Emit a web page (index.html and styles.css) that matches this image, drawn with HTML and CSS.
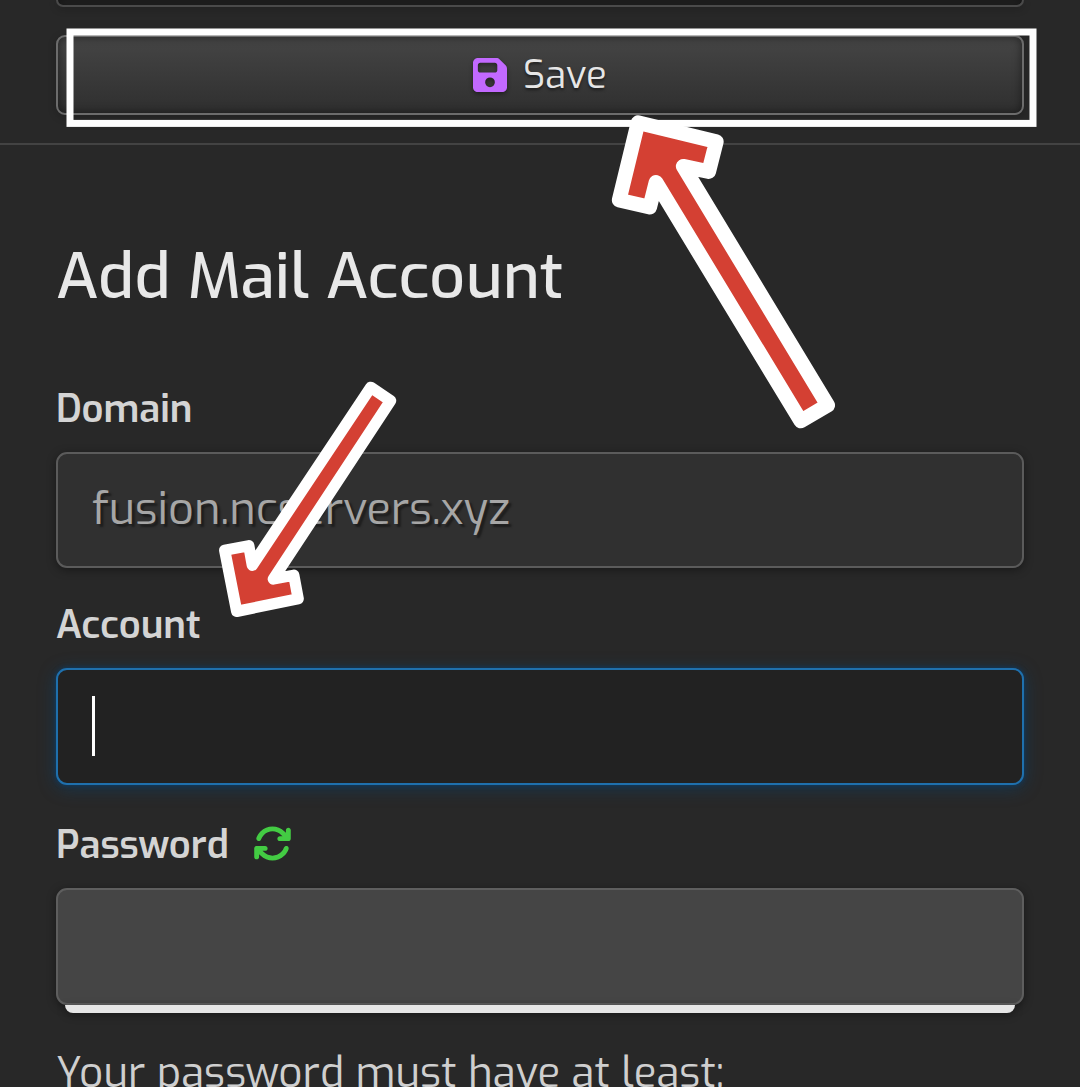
FILE: index.html
```html
<!DOCTYPE html>
<html lang="en">
<head>
<meta charset="utf-8">
<title>Add Mail Account</title>
<link rel="stylesheet" href="styles.css">
</head>
<body>
<div class="page">
  <section class="actions">
    <div class="button button-previous"></div>
    <button class="button button-save" type="button">
      <svg class="icon-save" viewBox="0 32 448 448"><path d="M64 32C28.7 32 0 60.7 0 96V416c0 35.3 28.7 64 64 64H384c35.3 0 64-28.7 64-64V173.3c0-17-6.7-33.3-18.7-45.3L352 50.7C340 38.7 323.7 32 306.7 32H64zm0 96c0-17.7 14.3-32 32-32H288c17.7 0 32 14.3 32 32v64c0 17.7-14.3 32-32 32H96c-17.7 0-32-14.3-32-32V128zM224 288a64 64 0 1 1 0 128 64 64 0 1 1 0-128z"/></svg>
      <span class="save-text">Save</span>
    </button>
  </section>
  <main class="form">
    <h1 class="title">Add Mail Account</h1>
    <div class="field">
      <div class="label"><span>Domain</span></div>
      <div class="input input-disabled"><span class="value">fusion.ncservers.xyz</span></div>
    </div>
    <div class="field field-account">
      <div class="label"><span>Account</span></div>
      <div class="input input-focus"><span class="caret"></span></div>
    </div>
    <div class="field field-password">
      <div class="label"><span>Password</span>
        <svg class="icon-refresh" viewBox="0 0 512 512"><path d="M105.1 202.6c7.7-21.8 20.2-42.3 37.8-59.8c62.5-62.5 163.8-62.5 226.3 0L386.3 160H352c-17.7 0-32 14.3-32 32s14.3 32 32 32H463.5c0 0 0 0 0 0h.4c17.7 0 32-14.3 32-32V80c0-17.7-14.3-32-32-32s-32 14.3-32 32v35.2L414.4 97.6c-87.5-87.5-229.3-87.5-316.8 0C73.2 122 55.6 150.7 44.8 181.4c-5.9 16.7 2.9 34.9 19.5 40.8s34.9-2.9 40.8-19.5zM39 289.3c-5 1.5-9.8 4.2-13.7 8.2c-4 4-6.7 8.8-8.1 14c-.3 1.2-.6 2.5-.8 3.8c-.3 1.7-.4 3.4-.4 5.1V432c0 17.7 14.3 32 32 32s32-14.3 32-32V396.9l17.6 17.5 0 0c87.5 87.4 229.3 87.4 316.7 0c24.4-24.4 42.1-53.1 52.9-83.7c5.9-16.7-2.9-34.9-19.5-40.8s-34.9 2.9-40.8 19.5c-7.7 21.8-20.2 42.3-37.8 59.8c-62.5 62.5-163.8 62.5-226.3 0l-.1-.1L125.6 352H160c17.7 0 32-14.3 32-32s-14.3-32-32-32H48.4c-1.6 0-3.2 .1-4.8 .3s-3.1 .5-4.6 1z"/></svg>
      </div>
      <div class="input input-password"></div>
      <div class="strength"></div>
    </div>
    <p class="hint">Your password must have at least:</p>
  </main>
  <svg class="annotations" viewBox="0 0 1080 1087">
    <rect class="frame" x="70" y="32" width="963" height="91.4"/>
    <path class="arrow" stroke-width="14.7" d="M638 122.7L716.3 141.7L708.7 171.6L683.2 166.3L827.7 405.2L800.8 421L656 182.3L649.7 207.2L619.2 200.1Z"/>
    <path class="arrow" stroke-width="11.3" d="M236.7 611.4L298.2 598.8L293.8 575.2L273.3 579L390.6 400.7L370.7 387.3L252.3 565.3L248.8 545.7L224.7 550.3Z"/>
  </svg>
</div>
</body>
</html>
```
FILE: styles.css
```css
* { box-sizing: border-box; }
body {
  margin: 0;
  background: #282828;
  color: #d2d2d2;
  font-family: Exo, "Exo 2", Roboto, sans-serif;
}
.page {
  position: relative;
  width: 1080px;
  height: 1087px;
  overflow: hidden;
}
.actions {
  height: 145px;
  padding: 0 56px;
  border-bottom: 2px solid #434343;
}
.button {
  width: 968px;
  border: 2px solid #6c6c6c;
  border-radius: 9px;
  background: linear-gradient(#454545, #2f2f2f);
  box-shadow: inset 0 0 10px rgba(0, 0, 0, .5), 0 2px 8px rgba(0, 0, 0, .2);
}
.button-previous {
  height: 7px;
  margin-bottom: 28px;
  border-top: 0;
  border-color: #4a4a4a;
  border-radius: 0 0 9px 9px;
  background: #292929;
}
.button-save {
  display: flex;
  align-items: center;
  justify-content: flex-start;
  gap: 16px;
  height: 80px;
  padding: 0 0 0 415px;
  color: #e6e6e6;
  font: 400 38.4px/60px Exo, "Exo 2", Roboto, sans-serif;
  text-shadow: 0 2px 3px rgba(0, 0, 0, .5);
}
.save-text { padding-top: 2px; }
.icon-save {
  width: 34px;
  height: 34px;
  fill: #c269ff;
  filter: drop-shadow(0 2px 2px rgba(0, 0, 0, .4));
}
.form { padding: 92px 56px 0; }
.title {
  margin: 0 0 62px;
  color: #e8e8e8;
  font-size: 63.1px;
  font-weight: 500;
  line-height: 80px;
}
.label {
  display: flex;
  align-items: center;
  height: 60px;
  margin-bottom: 13px;
  color: #d4d4d4;
  font-size: 38.2px;
  font-weight: 600;
  line-height: 60px;
}
.field-account { margin-top: 27px; }
.field-password { margin-top: 30px; }
.icon-refresh {
  width: 39px;
  height: 39px;
  margin: 0 0 3px 24px;
  fill: #43cb43;
}
.input {
  display: flex;
  align-items: center;
  height: 116px;
  padding: 0 34px;
  border: 2px solid #5b5b5b;
  border-radius: 11px;
  box-shadow: 0 2px 10px rgba(0, 0, 0, .4);
}
.input-disabled { background: #303030; }
.value {
  padding-bottom: 3px;
  color: #a6a6a6;
  font-size: 45px;
  font-weight: 400;
  line-height: 60px;
  text-shadow: 3px 3px 2px rgba(0, 0, 0, .4);
}
.input-focus {
  height: 117px;
  padding-bottom: 1px;
  border-color: #1f70ad;
  background: #222;
  box-shadow: 0 0 5px rgba(0, 70, 130, .6), 0 3px 18px rgba(0, 75, 130, .45);
}
.caret {
  width: 3px;
  height: 60px;
  background: #fff;
}
.input-password {
  height: 117px;
  border-color: #5e5e5e;
  background: #454545;
}
.strength {
  height: 8px;
  margin: 0 9px;
  border-radius: 0 0 8px 8px;
  background: #e6e6e6;
  box-shadow: 0 2px 8px rgba(0, 0, 0, .35);
}
.hint {
  margin: 30px 0 0;
  color: #cfcfcf;
  font-size: 42.1px;
  font-weight: 400;
  line-height: 60px;
  white-space: nowrap;
}
.annotations {
  position: absolute;
  inset: 0;
  width: 1080px;
  height: 1087px;
}
.frame {
  fill: none;
  stroke: #fff;
  stroke-width: 7;
}
.arrow {
  fill: #d44033;
  stroke: #fff;
  stroke-linejoin: round;
}
```
